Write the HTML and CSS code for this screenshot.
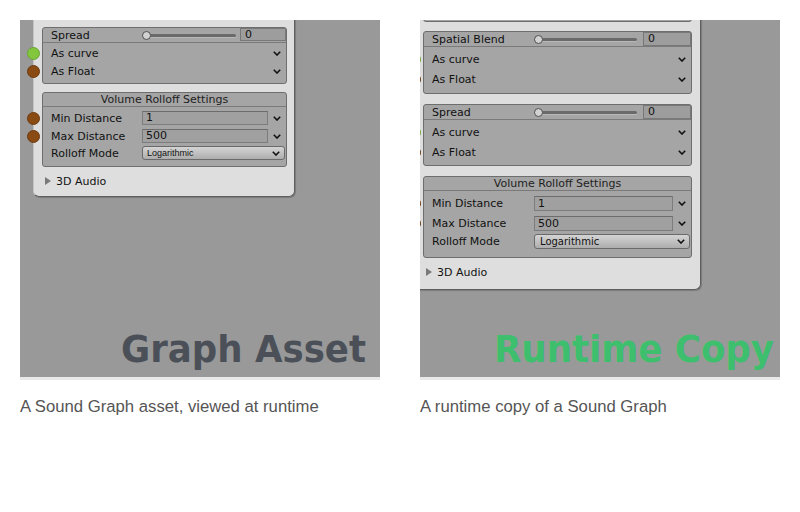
FILE: index.html
```html
<!DOCTYPE html>
<html>
<head>
<meta charset="utf-8">
<link rel="stylesheet" href="styles.css">
</head>
<body>
<div class="figures">
  <figure class="fig">
    <div class="shot">
      <div class="node node-a">
        <div class="group stub"></div>
        <div class="group g-slider">
          <div class="ghead">
            <span class="lbl">Spread</span>
            <div class="slider"><div class="track"></div><span class="thumb"></span></div>
            <div class="num">0</div>
          </div>
          <div class="gbody">
            <div class="row"><span class="port green"></span><span class="lbl">As curve</span><span class="chev"><svg width="8" height="5" viewBox="0 0 8 5"><path d="M0.8 0.8 L4 4 L7.2 0.8" fill="none" stroke="#111" stroke-width="1.6"/></svg></span></div>
            <div class="row"><span class="port brown"></span><span class="lbl">As Float</span><span class="chev"><svg width="8" height="5" viewBox="0 0 8 5"><path d="M0.8 0.8 L4 4 L7.2 0.8" fill="none" stroke="#111" stroke-width="1.6"/></svg></span></div>
          </div>
        </div>
        <div class="group g-vol">
          <div class="ghead title">Volume Rolloff Settings</div>
          <div class="gbody">
            <div class="row"><span class="port brown"></span><span class="lbl">Min Distance</span><div class="field">1</div><span class="chev"><svg width="8" height="5" viewBox="0 0 8 5"><path d="M0.8 0.8 L4 4 L7.2 0.8" fill="none" stroke="#111" stroke-width="1.6"/></svg></span></div>
            <div class="row"><span class="port brown"></span><span class="lbl">Max Distance</span><div class="field">500</div><span class="chev"><svg width="8" height="5" viewBox="0 0 8 5"><path d="M0.8 0.8 L4 4 L7.2 0.8" fill="none" stroke="#111" stroke-width="1.6"/></svg></span></div>
            <div class="row mode"><span class="lbl">Rolloff Mode</span><div class="dropdown"><span class="dd-text">Logarithmic</span><svg width="8" height="5" viewBox="0 0 8 5"><path d="M0.8 0.8 L4 4 L7.2 0.8" fill="none" stroke="#111" stroke-width="1.6"/></svg></div></div>
          </div>
        </div>
        <div class="foldout"><span class="tri"></span><span>3D Audio</span></div>
      </div>
      <div class="stamp stamp-a">Graph Asset</div>
    </div>
    <figcaption>A Sound Graph asset, viewed at runtime</figcaption>
  </figure>

  <figure class="fig">
    <div class="shot">
      <div class="node node-b">
        <div class="group stub"></div>
        <div class="group g-slider">
          <div class="ghead">
            <span class="lbl">Spatial Blend</span>
            <div class="slider"><div class="track"></div><span class="thumb"></span></div>
            <div class="num">0</div>
          </div>
          <div class="gbody">
            <div class="row"><span class="port green"></span><span class="lbl">As curve</span><span class="chev"><svg width="8" height="5" viewBox="0 0 8 5"><path d="M0.8 0.8 L4 4 L7.2 0.8" fill="none" stroke="#111" stroke-width="1.6"/></svg></span></div>
            <div class="row"><span class="port brown"></span><span class="lbl">As Float</span><span class="chev"><svg width="8" height="5" viewBox="0 0 8 5"><path d="M0.8 0.8 L4 4 L7.2 0.8" fill="none" stroke="#111" stroke-width="1.6"/></svg></span></div>
          </div>
        </div>
        <div class="group g-slider g-second">
          <div class="ghead">
            <span class="lbl">Spread</span>
            <div class="slider"><div class="track"></div><span class="thumb"></span></div>
            <div class="num">0</div>
          </div>
          <div class="gbody">
            <div class="row"><span class="port green"></span><span class="lbl">As curve</span><span class="chev"><svg width="8" height="5" viewBox="0 0 8 5"><path d="M0.8 0.8 L4 4 L7.2 0.8" fill="none" stroke="#111" stroke-width="1.6"/></svg></span></div>
            <div class="row"><span class="port brown"></span><span class="lbl">As Float</span><span class="chev"><svg width="8" height="5" viewBox="0 0 8 5"><path d="M0.8 0.8 L4 4 L7.2 0.8" fill="none" stroke="#111" stroke-width="1.6"/></svg></span></div>
          </div>
        </div>
        <div class="group g-vol">
          <div class="ghead title">Volume Rolloff Settings</div>
          <div class="gbody">
            <div class="row"><span class="port brown"></span><span class="lbl">Min Distance</span><div class="field">1</div><span class="chev"><svg width="8" height="5" viewBox="0 0 8 5"><path d="M0.8 0.8 L4 4 L7.2 0.8" fill="none" stroke="#111" stroke-width="1.6"/></svg></span></div>
            <div class="row"><span class="port brown"></span><span class="lbl">Max Distance</span><div class="field">500</div><span class="chev"><svg width="8" height="5" viewBox="0 0 8 5"><path d="M0.8 0.8 L4 4 L7.2 0.8" fill="none" stroke="#111" stroke-width="1.6"/></svg></span></div>
            <div class="row mode"><span class="lbl">Rolloff Mode</span><div class="dropdown"><span class="dd-text">Logarithmic</span><svg width="8" height="5" viewBox="0 0 8 5"><path d="M0.8 0.8 L4 4 L7.2 0.8" fill="none" stroke="#111" stroke-width="1.6"/></svg></div></div>
          </div>
        </div>
        <div class="foldout"><span class="tri"></span><span>3D Audio</span></div>
      </div>
      <div class="stamp stamp-b">Runtime Copy</div>
    </div>
    <figcaption>A runtime copy of a Sound Graph</figcaption>
  </figure>
</div>
</body>
</html>
```

FILE: styles.css
```css
* { box-sizing: border-box; }
body {
  margin: 0;
  background: #fff;
  font-family: "Liberation Sans", Arial, sans-serif;
}
.figures {
  display: flex;
  gap: 40px;
  padding: 20px 20px 0;
}
.fig {
  margin: 0;
  width: 360px;
}
.shot {
  position: relative;
  height: 360px;
  background: #999999;
  overflow: hidden;
  border-bottom: 3px solid #e8e8e8;
}
figcaption {
  margin-top: 18px;
  font-size: 16.7px;
  line-height: 18px;
  color: #555;
}

/* node panel */
.node {
  position: absolute;
  display: flex;
  flex-direction: column;
  background: #dedede;
  border: 1px solid #c4c4c4;
  border-top: none;
  border-right-color: #5f5f5f;
  border-bottom-color: #5f5f5f;
  border-radius: 0 0 6px 6px;
  box-shadow: 1px 1px 1px rgba(0, 0, 0, 0.2);
  font-family: "DejaVu Sans", sans-serif;
  font-size: 11px;
  color: #111;
}
.node-a {
  left: 13px;
  top: -20px;
  width: 262px;
  padding: 0 7px 6px 8px;
}
.node-b {
  left: -6px;
  top: -20px;
  width: 287px;
  padding: 0 8px 8px 8px;
}

.group {
  border: 1px solid #6e6e6e;
  border-radius: 3px;
  background: #a5a5a5;
}
.stub { height: 20px; border-radius: 0 0 3px 3px; }
.node-b .stub { height: 22px; }

.node-a .g-slider { margin-top: 7px; }
.node-a .g-vol { margin-top: 8px; }
.node-b .g-slider { margin-top: 9px; }
.node-b .g-second { margin-top: 10px; }
.node-b .g-vol { margin-top: 10px; }

.ghead {
  display: flex;
  align-items: center;
  height: 15px;
  border-bottom: 1px solid #7a7a7a;
}
.ghead.title {
  height: 14px;
  justify-content: center;
  color: #1e1e1e;
}

.gbody { padding: 1px 0 3px; }
.g-vol .gbody { padding: 2px 0 5px; }
.node-b .gbody { padding: 2px 0 4px; }
.node-b .g-second .gbody { padding: 2px 0 3px; }
.node-b .g-vol .gbody { padding: 2px 0 7px; }

.row {
  position: relative;
  display: flex;
  align-items: center;
  height: 18px;
}
.node-b .row { height: 20px; }
.row.mode { height: 16px; }
.node-b .row.mode { height: 17px; }

.lbl {
  flex: none;
  width: 99px;
  padding-left: 8px;
  white-space: nowrap;
}
.node-b .lbl { width: 110px; }

.chev {
  flex: none;
  width: 18px;
  margin-left: auto;
  display: flex;
  justify-content: center;
}
.chev svg, .dropdown svg { display: block; }

.port {
  position: absolute;
  left: -16px;
  top: 50%;
  width: 13px;
  height: 13px;
  margin-top: -6.5px;
  border-radius: 50%;
}
.port.green {
  background: #82c63e;
  border: 1px solid #6aa332;
}
.port.brown {
  background: #8a4a14;
  border: 1px solid #6e3a0e;
}

.field {
  flex: none;
  width: 126px;
  height: 14px;
  border: 1px solid #7c7c7c;
  border-top-color: #6c6c6c;
  background: #a0a0a0;
  padding-left: 3px;
  line-height: 12px;
}
.node-b .field {
  width: 139px;
  height: 15px;
  line-height: 13px;
}

.dropdown {
  flex: 1;
  margin-right: 1px;
  height: 14px;
  display: flex;
  align-items: center;
  justify-content: space-between;
  padding: 0 4px 0 4px;
  border: 1px solid #6a6a6a;
  border-radius: 3px;
  background: linear-gradient(#d4d4d4, #adadad);
  font-family: "Liberation Sans", Arial, sans-serif;
  font-size: 9px;
  color: #111;
}
.node-b .dropdown {
  height: 15px;
  margin-right: 1px;
  font-family: "DejaVu Sans", sans-serif;
  font-size: 10px;
  padding-left: 5px;
}

/* slider header */
.slider {
  position: relative;
  flex: none;
  width: 94px;
  height: 100%;
  display: flex;
  align-items: center;
  margin-right: 4px;
}
.node-b .slider { width: 103px; margin-right: 6px; }
.track {
  flex: 1;
  height: 3px;
  border-radius: 2px;
  background: #6a6a6a;
  box-shadow: 0 1px 0 #b8b8b8;
}
.thumb {
  position: absolute;
  left: 0;
  top: 50%;
  width: 9px;
  height: 9px;
  margin-top: -4.5px;
  border-radius: 50%;
  background: #d2d2d2;
  border: 1px solid #505050;
}
.num {
  flex: 1;
  align-self: flex-start;
  height: 13px;
  border: 1px solid #787878;
  background: #9d9d9d;
  padding-left: 4px;
  line-height: 11px;
}
.node-b .num { height: 14px; line-height: 12px; }

.foldout {
  display: flex;
  align-items: center;
  gap: 5px;
  height: 18px;
  margin-top: 5px;
  padding-left: 3px;
}
.tri {
  width: 0;
  height: 0;
  border-left: 6px solid #7a7a7a;
  border-top: 4px solid transparent;
  border-bottom: 4px solid transparent;
}

.stamp {
  position: absolute;
  bottom: 9px;
  font-family: "DejaVu Sans", sans-serif;
  font-weight: bold;
  font-size: 35.6px;
  line-height: 1;
  white-space: nowrap;
  transform: scaleY(1.07);
  transform-origin: bottom;
}
.stamp-a { right: 14px; color: #4b5058; }
.stamp-b { right: 6px; color: #3dbf6e; }
```
